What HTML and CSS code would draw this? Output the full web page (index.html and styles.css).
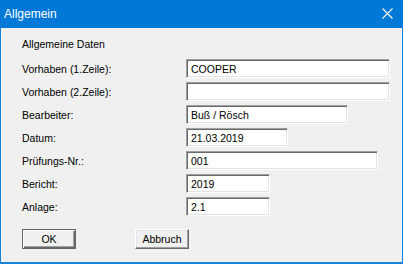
FILE: index.html
```html
<!DOCTYPE html>
<html lang="de">

<head>
    <meta charset="UTF-8">
    <meta name="viewport" content="width=device-width, initial-scale=1.0">
    <title>Allgemein</title>
    <link rel="stylesheet" href="styles.css">
</head>

<body>

    <div class="dialog">
        <div class="titlebar">
            <span class="title">Allgemein</span>
            <svg class="close-btn" width="11" height="11" viewBox="0 0 11 11">
                <path d="M0.5 0.5 L10.5 10.5 M10.5 0.5 L0.5 10.5" stroke="#fff" stroke-width="1.1" fill="none" />
            </svg>
        </div>

        <div class="content">
            <div class="heading">Allgemeine Daten</div>

            <div class="fields">
                <label>Vorhaben (1.Zeile):</label>
                <input type="text" class="w-204" value="COOPER">

                <label>Vorhaben (2.Zeile):</label>
                <input type="text" class="w-204" value="">

                <label>Bearbeiter:</label>
                <input type="text" class="w-162" value="Buß / Rösch">

                <label>Datum:</label>
                <input type="text" class="w-102" value="21.03.2019">

                <label>Prüfungs-Nr.:</label>
                <input type="text" class="w-192" value="001">

                <label>Bericht:</label>
                <input type="text" class="w-84" value="2019">

                <label>Anlage:</label>
                <input type="text" class="w-84" value="2.1">
            </div>

            <div class="buttons">
                <button class="btn default">OK</button>
                <button class="btn">Abbruch</button>
            </div>
        </div>
    </div>

</body>

</html>
```

FILE: styles.css
```css
body {
    margin: 0;
    font-family: "Liberation Sans", Arial, sans-serif;
    background-color: #ffffff;
}

.dialog {
    width: 403px;
    height: 264px;
    box-sizing: border-box;
    background-color: #f0f0f0;
    border: 1px solid #1883d7;
    border-top: none;
    border-bottom-width: 2px;
}

.titlebar {
    height: 27px;
    margin: 0 -1px;
    background-color: #0078d7;
    display: flex;
    align-items: center;
    justify-content: space-between;
    padding: 0 10px 1px 4px;
}

.title {
    color: #ffffff;
    font-size: 12px;
}

.close-btn {
    display: block;
}

.content {
    padding: 10px 0 0 21px;
}

.heading {
    font-size: 10.5px;
    line-height: 13px;
    color: #000;
}

.fields {
    display: grid;
    grid-template-columns: 164px auto;
    grid-auto-rows: 19px;
    row-gap: 4px;
    margin-top: 8px;
    align-items: center;
}

.fields label {
    font-size: 10.5px;
    color: #000;
}

.fields input {
    height: 19px;
    box-sizing: border-box;
    padding: 0 3px 0 4px;
    margin: 0;
    font-family: "Liberation Sans", Arial, sans-serif;
    font-size: 10.5px;
    color: #000;
    background-color: #fff;
    border: 1px solid;
    border-color: #a0a0a0 #ffffff #ffffff #a0a0a0;
    box-shadow: inset 1px 1px 0 #696969, inset -1px -1px 0 #e3e3e3;
    outline: none;
}

.w-204 { width: 204px; }
.w-192 { width: 192px; }
.w-162 { width: 162px; }
.w-102 { width: 102px; }
.w-84 { width: 84px; }

.buttons {
    display: flex;
    gap: 59px;
    margin-top: 13px;
}

.btn {
    width: 54px;
    height: 20px;
    padding: 0;
    font-family: "Liberation Sans", Arial, sans-serif;
    font-size: 10.5px;
    color: #000;
    background-color: #f0f0f0;
    border: 1px solid;
    border-color: #ffffff #696969 #696969 #ffffff;
    box-shadow: inset -1px -1px 0 #a0a0a0, inset 1px 1px 0 #e3e3e3;
}

.btn.default {
    border-color: #646464;
    box-shadow: inset 1px 1px 0 #ffffff, inset -1px -1px 0 #696969, inset -2px -2px 0 #a0a0a0;
}
```
